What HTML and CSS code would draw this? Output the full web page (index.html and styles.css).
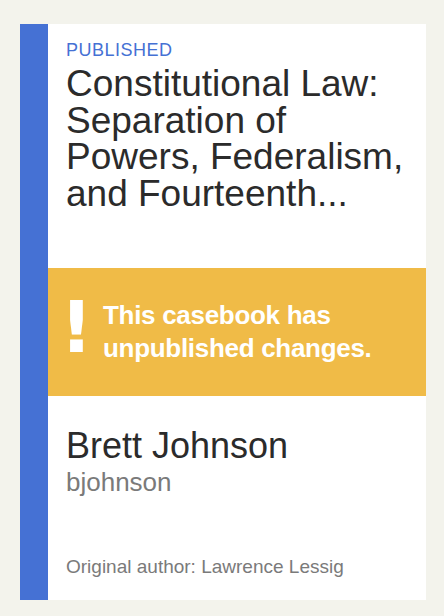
FILE: index.html
```html
<!DOCTYPE html>
<html lang="en">
<head>
<meta charset="utf-8">
<title>Casebook</title>
<link rel="stylesheet" href="styles.css">
</head>
<body>
  <article class="card">
    <div class="card-stripe"></div>
    <div class="card-body">
      <header class="card-head">
        <div class="status">PUBLISHED</div>
        <h1 class="title">Constitutional Law: Separation of Powers, Federalism, and Fourteenth...</h1>
      </header>
      <div class="notice">
        <span class="notice-icon">!</span>
        <p class="notice-text">This casebook has unpublished changes.</p>
      </div>
      <div class="card-author">
        <div class="author-name">Brett Johnson</div>
        <div class="author-handle">bjohnson</div>
        <div class="original">Original author: Lawrence Lessig</div>
      </div>
    </div>
  </article>
</body>
</html>
```
FILE: styles.css
```css
* { box-sizing: border-box; }
html, body { margin: 0; }
body {
  background: #f3f3ec;
  padding: 24px 18px 16px 20px;
  font-family: "Liberation Sans", Arial, sans-serif;
  height: 616px;
}
.card {
  display: flex;
  height: 576px;
  background: #ffffff;
}
.card-stripe {
  width: 28px;
  flex: none;
  background: #4571d4;
}
.card-body {
  flex: 1;
  display: flex;
  flex-direction: column;
}
.card-head {
  height: 244px;
  padding: 16px 18px 0 18px;
}
.status {
  font-size: 18px;
  line-height: 20px;
  letter-spacing: 0.5px;
  color: #4571d4;
}
.title {
  margin: 6px 0 0 0;
  font-size: 37px;
  line-height: 36.7px;
  font-weight: normal;
  color: #2b2b2b;
}
.notice {
  height: 128px;
  background: #f0bb47;
  display: flex;
  align-items: center;
  padding-left: 12px;
  color: #ffffff;
}
.notice-icon {
  font-family: "DejaVu Sans", sans-serif;
  font-size: 72px;
  font-weight: bold;
  line-height: 72px;
  width: 43px;
  flex: none;
  margin-bottom: 10px;
}
.notice-text {
  margin: 0;
  font-size: 26px;
  line-height: 33px;
  font-weight: bold;
  letter-spacing: -0.3px;
  width: 290px;
}
.card-author {
  flex: 1;
  display: flex;
  flex-direction: column;
  padding: 30px 18px 22px 18px;
}
.author-name {
  font-size: 36px;
  line-height: 40px;
  color: #2b2b2b;
}
.author-handle {
  font-size: 26px;
  line-height: 32px;
  color: #7a7a7a;
}
.original {
  margin-top: auto;
  font-size: 19px;
  line-height: 22px;
  color: #7a7a7a;
}
```
